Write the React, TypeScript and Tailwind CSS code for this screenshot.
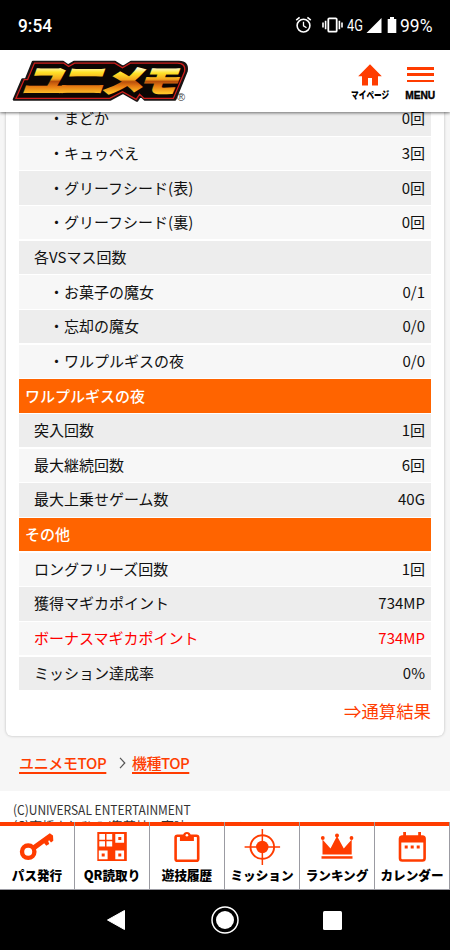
import React from "react";

type Row = { label: string; value?: string; kind?: "sub" | "head" | "red" };

const rows: Row[] = [
  { label: "・まどか", value: "0回", kind: "sub" },
  { label: "・キュゥべえ", value: "3回", kind: "sub" },
  { label: "・グリーフシード(表)", value: "0回", kind: "sub" },
  { label: "・グリーフシード(裏)", value: "0回", kind: "sub" },
  { label: "各VSマス回数" },
  { label: "・お菓子の魔女", value: "0/1", kind: "sub" },
  { label: "・忘却の魔女", value: "0/0", kind: "sub" },
  { label: "・ワルプルギスの夜", value: "0/0", kind: "sub" },
  { label: "ワルプルギスの夜", kind: "head" },
  { label: "突入回数", value: "1回" },
  { label: "最大継続回数", value: "6回" },
  { label: "最大上乗せゲーム数", value: "40G" },
  { label: "その他", kind: "head" },
  { label: "ロングフリーズ回数", value: "1回" },
  { label: "獲得マギカポイント", value: "734MP" },
  { label: "ボーナスマギカポイント", value: "734MP", kind: "red" },
  { label: "ミッション達成率", value: "0%" },
];

const darkRows = [0, 2, 4, 6, 9, 11, 14, 16];

function StatusBar() {
  return (
    <div className="flex h-[50px] shrink-0 items-center bg-black pl-[18px] text-white">
      <span className="mt-[2px] origin-left scale-x-[0.96] font-['Roboto',sans-serif] text-[18px] font-medium leading-none">9:54</span>
      <svg className="ml-auto" width="17" height="18" viewBox="0 0 17 18" fill="none" stroke="#fff">
        <circle cx="8.5" cy="9.6" r="6.4" strokeWidth="1.6" />
        <path d="M8.5 5.7v4.2l3 1.9" strokeWidth="1.3" />
        <path d="M1.2 4.2 4.6 1.4M15.8 4.2l-3.4-2.8" strokeWidth="1.6" />
      </svg>
      <svg className="ml-[10px]" width="21" height="18" viewBox="0 0 21 18" fill="none" stroke="#fff" strokeWidth="1.6">
        <rect x="6.3" y="2.3" width="8.4" height="13.4" rx="1" strokeWidth="1.8" />
        <path d="M1 6.5v5M3.6 4.8v8.4M17.4 4.8v8.4M20 6.5v5" />
      </svg>
      <span className="ml-[4px] mt-[2px] w-[17px] origin-left scale-x-[0.8] font-['Roboto',sans-serif] text-[16px] leading-none">4G</span>
      <svg className="ml-[2px]" width="16" height="17" viewBox="0 0 16 17" fill="#fff">
        <path d="M15.5 1v15H.5z" />
      </svg>
      <svg className="ml-[5px]" width="10" height="18" viewBox="0 0 10 18" fill="#fff">
        <path d="M3 1h4v2h2.3v14H.7V3H3z" />
      </svg>
      <span className="ml-[3px] mr-[17px] mt-[2px] w-[33px] origin-left scale-x-[0.97] whitespace-nowrap font-['Roboto',sans-serif] text-[18px] leading-none">99%</span>
    </div>
  );
}

function Logo() {
  const outline =
    "M33 62H63L68 65.5L74 62H115L123 67L131 62H179Q188 62 186.500 71L175 99.500H145L140.500 95L137 100.500L123 92.500L110 99.500H14L22.500 79.500H26Z";
  return (
    <svg className="absolute left-0 top-0" width="195" height="62" viewBox="0 50 195 62" role="img" aria-label="ユニメモ">
      <defs>
        <linearGradient id="goldGlyph" gradientUnits="userSpaceOnUse" x1="0" y1="-23.500" x2="0" y2="1">
          <stop offset="0" stopColor="#fffbd0" />
          <stop offset=".2" stopColor="#ffe328" />
          <stop offset=".45" stopColor="#f5a51c" />
          <stop offset=".54" stopColor="#b74e0c" />
          <stop offset=".72" stopColor="#e67a12" />
          <stop offset="1" stopColor="#ffc629" />
        </linearGradient>
      </defs>
      <path d={outline} fill="#090606" stroke="#181414" strokeWidth="2.600" strokeLinejoin="round" />
      <path d={outline} fill="#0b0604" stroke="#cf1f1c" strokeWidth="1.300" transform="translate(100 81) scale(.978 .94) translate(-100 -81)" />
      <g fontFamily="'Noto Sans CJK JP', sans-serif" fontWeight="900" fontSize="30" fill="url(#goldGlyph)" stroke="url(#goldGlyph)" strokeWidth="1.600">
        <text transform="translate(21.500 93) skewX(-20) scale(1.420 1.120)">ユ</text>
        <text transform="translate(56.500 93) skewX(-20) scale(1.580 1.120)">ニ</text>
        <text transform="translate(100 92) skewX(-20) scale(1.420 1)">メ</text>
        <text transform="translate(138 92) skewX(-20) scale(1.290 1.020)">モ</text>
      </g>
      <text x="177" y="100.500" fontFamily="'Liberation Sans', sans-serif" fontSize="11" fill="#444">®</text>
    </svg>
  );
}

function Header() {
  return (
    <header className="relative z-10 flex h-[62px] shrink-0 justify-end bg-white shadow-[0_1px_3px_rgba(0,0,0,0.55)]">
      <Logo />
      <div className="flex w-[50px] flex-col items-center pt-[14px]">
        <svg width="24" height="22" viewBox="0 0 24 22" fill="#ff3c00">
          <path d="M12 .3 23.800 12.200H20V21.500H14V14H10V21.500H4V12.200H.2z" />
        </svg>
        <span className="mt-[3px] scale-x-[0.73] whitespace-nowrap font-['Noto_Sans_CJK_JP',sans-serif] text-[10.500px] font-black leading-[12px] text-black">
          マイページ
        </span>
      </div>
      <div className="mr-[5px] flex w-[50px] flex-col items-center pt-[17px]">
        <div className="flex h-[15px] w-[27px] flex-col justify-between">
          <div className="h-[2.500px] bg-[#ff3c00]" />
          <div className="h-[2.500px] bg-[#ff3c00]" />
          <div className="h-[2.500px] bg-[#ff3c00]" />
        </div>
        <span className="mt-[7px] scale-x-[0.93] font-['Liberation_Sans',sans-serif] text-[11px] font-bold leading-[12px] text-black [-webkit-text-stroke:0.4px_#000]">
          MENU
        </span>
      </div>
    </header>
  );
}

function ResultRow({ row, dark }: { row: Row; dark: boolean }) {
  if (row.kind === "head") {
    return (
      <div className="flex h-[33.500px] shrink-0 items-center bg-[#ff6400] pb-[2px] pl-[6px] text-[15px] font-medium text-white">
        <span className="leading-none">{row.label}</span>
      </div>
    );
  }
  return (
    <div
      className={`flex h-[33.500px] shrink-0 items-center justify-between pb-[2px] pr-[6px] text-[15px] ${
        row.kind === "sub" ? "pl-[30px]" : "pl-[15px]"
      } ${row.kind === "red" ? "text-[#f00]" : "text-[#111]"} ${dark ? "bg-[#ededed]" : "bg-[#f7f7f7]"}`}
    >
      <span className="leading-none">{row.label}</span>
      <span className="leading-none">{row.value}</span>
    </div>
  );
}

const icons = {
  key: (
    <g>
      <circle cx="28.200" cy="19.700" r="6.200" fill="none" stroke="#ff3c00" strokeWidth="4.400" />
      <path d="M32 14 49.800 1.300 53 3.500 53.300 8.800 51 10.500 49.200 8.300 48.200 9.100 49.200 12 46.300 13.800 44.200 11.200 35.500 17.800z" />
    </g>
  ),
  qr: (
    <g>
      <path d="M22.300 0h29.500v29H22.300z" />
      <path
        fill="#fff"
        d="M24.300 2h5.700v5.700h-5.700zM31.500 2h5.700v5.700h-5.700zM24.300 9.200h5.700v5.400h-5.700zM31.500 9.200h5.700v5.400h-5.700zM40.300 2h8.800v8.800h-8.800zM23.800 18.600h8.800v8.600h-8.800zM40.300 18.600h8.800v8.600h-8.800z"
      />
      <path d="M43.300 5h3v3h-3zM26.700 21.500h3v3h-3zM43.300 21.500h3v3h-3z" />
    </g>
  ),
  clipboard: (
    <g>
      <rect x="25.600" y="3.700" width="22.600" height="25" rx="1.800" fill="none" stroke="#ff3c00" strokeWidth="2.600" />
      <path d="M29.900 3h3.200a3.900 3.900 0 0 1 7.600 0h3.200v6h-14z" />
      <circle cx="36.900" cy="3.200" r="1.300" fill="#fff" />
    </g>
  ),
  target: (
    <g>
      <circle cx="37.300" cy="15" r="11.800" fill="none" stroke="#ff3c00" strokeWidth="1.900" />
      <path d="M36.600-3h1.500v36h-1.500zM19.600 14.300h35.500v1.500H19.600z" />
      <circle cx="37.300" cy="15" r="6.200" />
    </g>
  ),
  crown: (
    <g>
      <path d="M22.500 22.500V7.500L30.500 16.500 37 4 43.800 16.500 51.700 7.500V22.500z" />
      <path d="M21.500 24.200h31v2.500h-31z" />
      <circle cx="22.800" cy="6" r="1.900" />
      <circle cx="37" cy="3.600" r="2" />
      <circle cx="51.500" cy="6" r="1.900" />
    </g>
  ),
  calendar: (
    <g>
      <rect x="25" y="4.500" width="24.600" height="24" rx="2.200" fill="none" stroke="#ff3c00" strokeWidth="2.600" />
      <path d="M24.700 4h25v6.500h-25zM28.200 0H31v5h-2.800zM43.200 0H46v5h-2.800zM29.700 13.500h3v3h-3zM35.700 13.500h3v3h-3zM41.700 13.500h3v3h-3z" />
    </g>
  ),
};

const tabs = [
  { label: "パス発行", icon: icons.key },
  { label: "QR読取り", icon: icons.qr },
  { label: "遊技履歴", icon: icons.clipboard },
  { label: "ミッション", icon: icons.target },
  { label: "ランキング", icon: icons.crown },
  { label: "カレンダー", icon: icons.calendar },
];

function TabBar() {
  return (
    <nav className="relative z-10 grid h-[68px] shrink-0 grid-cols-6 border-b border-[#9b9ba2] bg-white">
      {tabs.map((t) => (
        <div key={t.label} className="flex min-w-0 flex-col items-center border-r border-[#9b9ba2]">
          <div className="h-[4px] w-full shrink-0 bg-[#ff3c00]" />
          <svg className="mt-[6px] shrink-0 overflow-visible" width="74" height="30" viewBox="0 0 74 30" fill="#ff3c00">
            {t.icon}
          </svg>
          <span className="mt-[6px] whitespace-nowrap text-[12.600px] font-black leading-[14px] text-black">{t.label}</span>
        </div>
      ))}
    </nav>
  );
}

function AndroidNav() {
  return (
    <div className="flex h-[60px] shrink-0 items-center bg-black pl-[106px]">
      <svg width="20" height="22" viewBox="0 0 20 22" fill="#fff" stroke="#fff" strokeLinejoin="round">
        <path d="M18.500 1.500v19L1.500 11z" />
      </svg>
      <svg className="ml-[85px]" width="28" height="28" viewBox="0 0 28 28" fill="#fff">
        <circle cx="14" cy="14" r="9" />
        <circle cx="14" cy="14" r="13" fill="none" stroke="#fff" strokeWidth="1.500" />
      </svg>
      <div className="ml-[84px] h-[19px] w-[19px] rounded-[1.500px] bg-white" />
    </div>
  );
}

export default function App() {
  return (
    <div className="flex h-[950px] w-[450px] flex-col overflow-hidden bg-white font-['Noto_Sans_CJK_JP',sans-serif]">
      <StatusBar />
      <Header />
      <main className="flex h-[710px] shrink-0 flex-col overflow-hidden bg-[#f6f6f6]">
        <section className="mx-[6px] -mt-[24px] flex h-[648px] shrink-0 flex-col rounded-[6px] bg-white px-[13px] pt-[14px] shadow-[0_0_3px_rgba(0,0,0,0.25)]">
          <div className="flex flex-col gap-[1.170px]">
            {rows.map((row, i) => (
              <ResultRow key={i} row={row} dark={darkRows.includes(i)} />
            ))}
          </div>
          <a className="mt-[11px] self-end text-[17.400px] leading-[19px] text-[#ff3c00]">⇒通算結果</a>
        </section>
        <div className="flex h-[55px] shrink-0 items-center pb-[2px] pl-[19px] text-[15px] font-medium leading-[20px] text-[#ff3c00]">
          <a className="w-[87px] whitespace-nowrap underline decoration-[1.500px] underline-offset-[3px] tracking-[-0.35px]">ユニメモTOP</a>
          <svg className="ml-[13px] mr-[6px]" width="7" height="12" viewBox="0 0 7 12" fill="none" stroke="#555" strokeWidth="1.200">
            <path d="M1 .8 5.800 6 1 11.200" />
          </svg>
          <a className="whitespace-nowrap underline decoration-[1.500px] underline-offset-[3px] tracking-[-0.5px]">機種TOP</a>
        </div>
        <footer className="h-[60px] shrink-0 bg-white pl-[13px] pt-[11px] text-[13px] leading-[16px] text-[#333]">
          <p className="w-max origin-left scale-x-[0.922] whitespace-nowrap">(C)UNIVERSAL ENTERTAINMENT</p>
          <p className="whitespace-nowrap tracking-[-0.3px]">(C)高橋よしひろ/集英社・東映アニメーション</p>
        </footer>
      </main>
      <TabBar />
      <AndroidNav />
    </div>
  );
}
